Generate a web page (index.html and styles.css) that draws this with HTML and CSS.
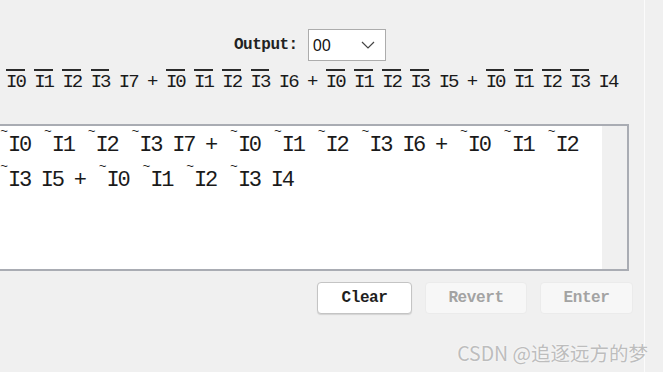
FILE: index.html
```html
<!DOCTYPE html>
<html lang="en">
<head>
    <meta charset="UTF-8">
    <meta name="viewport" content="width=device-width, initial-scale=1.0">
    <title>Combinational Analysis - Expression</title>
    <link rel="stylesheet" href="styles.css">
</head>
<body>
    <div class="panel">
        <div class="output-row">
            <label class="output-label" for="output">Output:</label>
            <div class="select" id="output">
                <span>00</span>
                <svg class="chevron" width="14" height="8" viewBox="0 0 14 8">
                    <path d="M1 1 L7 7 L13 1" fill="none" stroke="#444" stroke-width="1.2"/>
                </svg>
            </div>
        </div>

        <!-- rendered expression, negated inputs drawn with a bar -->
        <div class="expr"><span class="bar">I0</span> <span class="bar">I1</span> <span class="bar">I2</span> <span class="bar">I3</span> I7 + <span class="bar">I0</span> <span class="bar">I1</span> <span class="bar">I2</span> <span class="bar">I3</span> I6 + <span class="bar">I0</span> <span class="bar">I1</span> <span class="bar">I2</span> <span class="bar">I3</span> I5 + <span class="bar">I0</span> <span class="bar">I1</span> <span class="bar">I2</span> <span class="bar">I3</span> I4</div>

        <div class="editor">
            <div class="editor-text"><span class="tilde">~</span>I0 <span class="tilde">~</span>I1 <span class="tilde">~</span>I2 <span class="tilde">~</span>I3 I7 + <span class="tilde">~</span>I0 <span class="tilde">~</span>I1 <span class="tilde">~</span>I2 <span class="tilde">~</span>I3 I6 + <span class="tilde">~</span>I0 <span class="tilde">~</span>I1 <span class="tilde">~</span>I2<br><span class="tilde">~</span>I3 I5 + <span class="tilde">~</span>I0 <span class="tilde">~</span>I1 <span class="tilde">~</span>I2 <span class="tilde">~</span>I3 I4</div>
            <div class="editor-gutter"></div>
        </div>

        <div class="buttons">
            <button type="button" class="btn btn-clear">Clear</button>
            <button type="button" class="btn btn-revert" disabled>Revert</button>
            <button type="button" class="btn btn-enter" disabled>Enter</button>
        </div>
    </div>

    <div class="watermark">CSDN @追逐远方的梦</div>
</body>
</html>
```

FILE: styles.css
```css
body {
    margin: 0;
    background-color: #f0f0f0;
    font-family: "Liberation Mono", monospace;
    color: #222;
    overflow: hidden;
}
.panel {
    width: 645px;
    height: 372px;
    box-sizing: border-box;
    border-right: 1px solid #fbfbfb;
}
.output-row {
    display: flex;
    align-items: center;
    gap: 10px;
    padding-top: 29px;
    padding-left: 234px;
}
.output-label {
    font-size: 16px;
    font-weight: bold;
    letter-spacing: -0.5px;
    color: #222;
}
.select {
    width: 78px;
    height: 32px;
    box-sizing: border-box;
    border: 1px solid #acacac;
    background: white;
    display: flex;
    align-items: center;
    justify-content: space-between;
    padding: 0 10px 0 4px;
    font-family: "Noto Sans", sans-serif;
    font-size: 16px;
    color: #111;
}
.expr {
    margin-top: 9px;
    padding-left: 6px;
    font-size: 19px;
    letter-spacing: -2px;
    line-height: 24px;
    white-space: nowrap;
    color: #1a1a1a;
}
.bar {
    border-top: 2px solid #2a2a2a;
}
.editor {
    margin-top: 30px;
    margin-left: -10px;
    width: 639px;
    height: 147px;
    box-sizing: border-box;
    border: 2px solid #a9acb3;
    display: flex;
    background: white;
}
.editor-text {
    flex: 1;
    padding: 2px 0 0 5px;
    font-size: 22px;
    letter-spacing: -2.25px;
    line-height: 35px;
    white-space: nowrap;
    color: #1a1a1a;
}
.tilde {
    display: inline-block;
    width: 10.95px;
    text-align: right;
    font-size: 13px;
    letter-spacing: 0;
    vertical-align: 16px;
    line-height: 6px;
}
.editor-gutter {
    width: 25px;
    background: #f0f0f0;
}
.buttons {
    display: flex;
    justify-content: flex-end;
    gap: 13px;
    margin-top: 11px;
    padding-right: 11px;
}
.btn {
    height: 32px;
    box-sizing: border-box;
    border-radius: 4px;
    font-family: "Liberation Mono", monospace;
    font-size: 16px;
    font-weight: bold;
    letter-spacing: -0.4px;
    padding: 0;
}
.btn-clear {
    width: 95px;
    background: white;
    border: 1px solid #c4c4c4;
    box-shadow: 0 1px 1px rgba(0, 0, 0, 0.12);
    color: #1e1e1e;
}
.btn-revert, .btn-enter {
    background: #f7f7f7;
    border: 1px solid #ebebeb;
    color: #a3a3a3;
}
.btn-revert {
    width: 102px;
}
.btn-enter {
    width: 93px;
}
.watermark {
    position: absolute;
    right: 15px;
    top: 338px;
    font-family: "Noto Sans CJK SC", sans-serif;
    font-size: 19.5px;
    color: #bdbdbd;
    text-shadow: 0 0 2px #fff;
}
```
